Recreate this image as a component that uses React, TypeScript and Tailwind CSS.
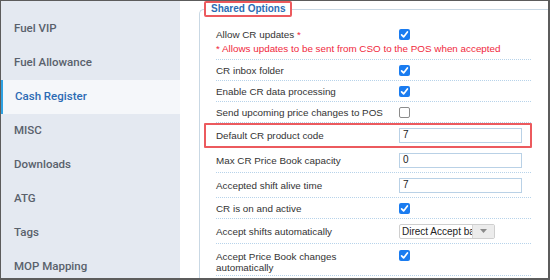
import React from "react";

const navItems = [
  "Fuel VIP",
  "Fuel Allowance",
  "Cash Register",
  "MISC",
  "Downloads",
  "ATG",
  "Tags",
  "MOP Mapping",
];

function Check({ on }: { on: boolean }) {
  if (!on) {
    return (
      <span className="block w-[11px] h-[11px] rounded-[2px] border border-[#8c8c8c] bg-white" />
    );
  }
  return (
    <span className="flex w-[11px] h-[11px] rounded-[2px] bg-[#1a7cf0] items-center justify-center">
      <svg width="11" height="11" viewBox="0 0 11 11">
        <polyline
          points="2.6,5.8 4.6,7.9 8.4,3"
          fill="none"
          stroke="white"
          strokeWidth="1.7"
          strokeLinecap="round"
          strokeLinejoin="round"
        />
      </svg>
    </span>
  );
}

function Input({ value }: { value: string }) {
  return (
    <div className="w-[123px] h-[15px] border border-[#b9d1e6] bg-white flex items-center pl-[3px] text-[10px] text-[#222] leading-none">
      {value}
    </div>
  );
}

function Row({
  label,
  children,
  h,
  highlight,
}: {
  label: React.ReactNode;
  children: React.ReactNode;
  h: string;
  highlight?: boolean;
}) {
  return (
    <div
      className={`relative flex items-center w-[315px] border-b border-dotted border-[#b7d3ea] ${h}`}
    >
      <div className="w-[183px] shrink-0 pt-[2px]">{label}</div>
      <div className="flex items-center">{children}</div>
      {highlight && (
        <div className="absolute -left-[12px] -right-[1px] top-[0px] -bottom-[1px] border-2 border-[#ec5a5e] rounded-[1px]" />
      )}
    </div>
  );
}

export default function App() {
  return (
    <div
      className="w-[550px] h-[280px] border-t border-l border-r-2 border-b-2 border-[#5c5c5c] flex overflow-hidden bg-white"
      style={{ fontFamily: '"Liberation Sans", Arial, sans-serif' }}
    >
      {/* Sidebar */}
      <div
        className="w-[179px] shrink-0 bg-[#e4e9f1] pt-[11px] flex flex-col"
        style={{ fontFamily: "Roboto, sans-serif" }}
      >
        {navItems.map((item) =>
          item === "Cash Register" ? (
            <div
              key={item}
              className="h-[34px] shrink-0 flex items-center bg-[#f5f7fa] border-l-2 border-[#2fa2e3] pl-[12px] text-[11.5px] font-medium text-[#2d6bb4]"
            >
              {item}
            </div>
          ) : (
            <div
              key={item}
              className="h-[34px] shrink-0 flex items-center pl-[13px] text-[11.5px] font-medium text-[#59616c]"
            >
              {item}
            </div>
          )
        )}
      </div>

      {/* Content */}
      <div className="flex-1 bg-white">
        <fieldset className="ml-[19px] border-t border-l border-[#c9d8e4] rounded-tl-[5px] p-0 m-0 h-[300px]">
          <legend className="ml-[4px] h-[16px] px-[5px] border-2 border-[#ec5a5e] rounded-[2px] text-[10px] font-bold text-[#2b6cb4] leading-[12px]">
            Shared Options
          </legend>
          <div className="pl-[16px] pt-[7px] text-[9.85px] text-[#333] leading-[14px]">
            <div className="flex w-[315px] border-b border-dotted border-[#b7d3ea] h-[36px] pt-[4px]">
              <div className="w-[183px] shrink-0">
                <div>
                  Allow CR updates <span className="text-[#f0283c]">*</span>
                </div>
                <div className="text-[#f0283c] whitespace-nowrap">
                  * Allows updates to be sent from CSO to the POS when accepted
                </div>
              </div>
              <div className="pt-[1px]">
                <Check on />
              </div>
            </div>
            <Row label="CR inbox folder" h="h-[21px]">
              <Check on />
            </Row>
            <Row label="Enable CR data processing" h="h-[21px]">
              <Check on />
            </Row>
            <Row label="Send upcoming price changes to POS" h="h-[21px]">
              <Check on={false} />
            </Row>
            <Row label="Default CR product code" h="h-[25px]" highlight>
              <Input value="7" />
            </Row>
            <Row label="Max CR Price Book capacity" h="h-[25px]">
              <Input value="0" />
            </Row>
            <Row label="Accepted shift alive time" h="h-[25px]">
              <Input value="7" />
            </Row>
            <Row label="CR is on and active" h="h-[21px]">
              <Check on />
            </Row>
            <Row label="Accept shifts automatically" h="h-[25px]">
              <div className="w-[96px] h-[15px] border border-[#cfcfcf] rounded-[2px] flex overflow-hidden">
                <div className="flex-1 overflow-hidden whitespace-nowrap pl-[2px] leading-[13px] text-[10px] text-[#222]">
                  Direct Accept based
                </div>
                <div className="w-[22px] bg-[#ececec] border-l border-[#d6d6d6] flex items-center justify-center">
                  <svg width="7" height="4" viewBox="0 0 7 4">
                    <polygon points="0,0 7,0 3.5,4" fill="#8a8a8a" />
                  </svg>
                </div>
              </div>
            </Row>
            <div className="flex w-[315px] border-b border-dotted border-[#b7d3ea] h-[32px] pt-[6px]">
              <div className="w-[183px] shrink-0 leading-[11px] pt-[1px]">
                Accept Price Book changes
                <br />
                automatically
              </div>
              <div>
                <Check on />
              </div>
            </div>
          </div>
        </fieldset>
      </div>
    </div>
  );
}
